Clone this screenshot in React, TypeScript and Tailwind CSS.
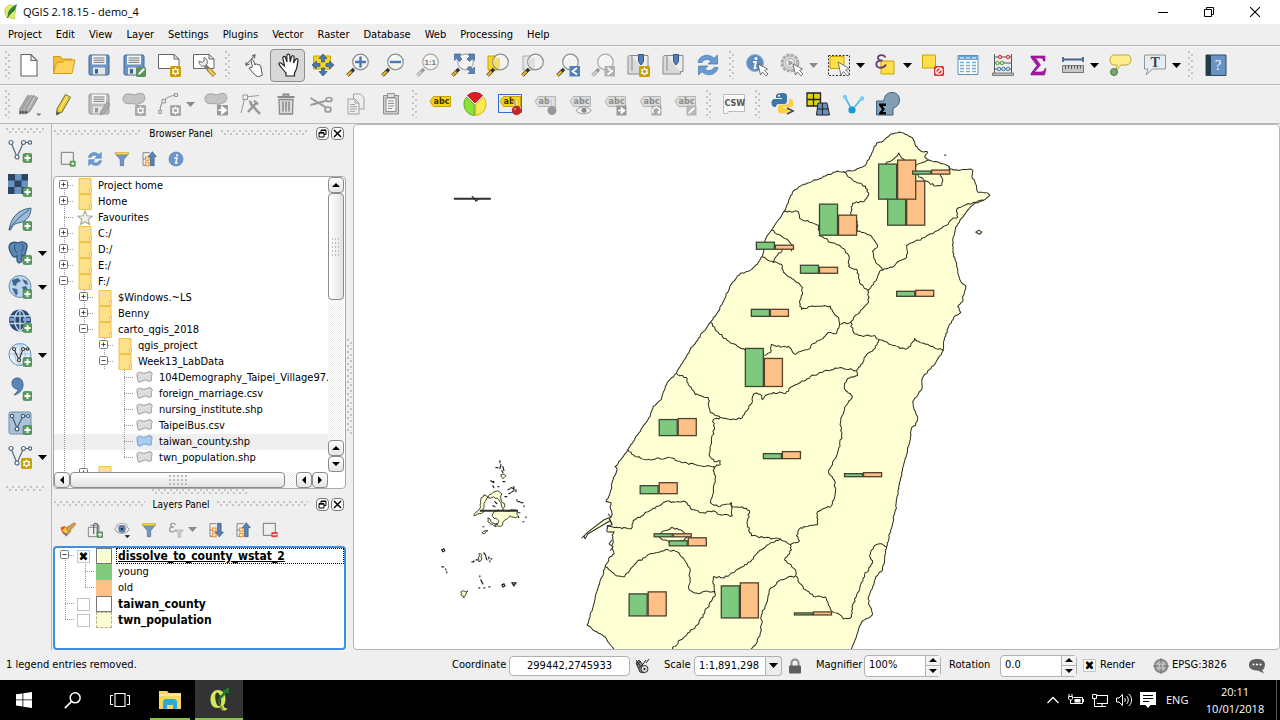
import React, { useState } from "react";
import type { ReactNode } from "react";

const UI = "font-['DejaVu_Sans_Condensed','Noto_Sans',sans-serif]";
const SEGOE = "font-['Open_Sans','Noto_Sans',sans-serif]";

/* ---------- shared icon parts ---------- */

const GreenPlus = () => (
  <g>
    <rect x="15" y="14.5" width="9" height="9" rx="1.5" fill="#5a9a5c" stroke="#3f7d44" strokeWidth=".6" />
    <path d="M19.5 16v6M16.5 19h6" stroke="#fff" strokeWidth="1.8" />
  </g>
);

const StarBadge = ({ c = "#c8a000" }: { c?: string }) => (
  <g>
    <rect x="13" y="13" width="11" height="11" rx="1.500" fill={c} />
    <path d="M18.500 14.500v8M15 16.500l7 4M22 16.500l-7 4" stroke="#fff" strokeWidth="1.100" />
    <circle cx="18.500" cy="18.500" r="2.400" fill={c} stroke="#fff" strokeWidth="1.200" />
  </g>
);

const Lens = ({ handle = "#f5b921", rim = "#8b8f8c", children }: { handle?: string; rim?: string; children?: ReactNode }) => (
  <g>
    <path d="M1.500 22.500l6.500-6.500" stroke={handle === "#f5b921" ? "#333" : "#999"} strokeWidth="3.400" />
    <path d="M1.500 22.500l4-4" stroke={handle} strokeWidth="2.200" />
    <circle cx="14.500" cy="9" r="7.800" fill="#f4f6f3" fillOpacity=".75" stroke={rim} strokeWidth="1.200" />
    <path d="M9 7a6 6 0 0 1 5-4" stroke="#fff" strokeWidth="1.500" fill="none" />
    {children}
  </g>
);

const Tag = ({ on = false, text = "abc" }: { on?: boolean; text?: string }) => (
  <g>
    <path d="M5.500 4.500H22.500v10H5.500L2 9.500z" fill={on ? "#f7d417" : "#dcdcdc"} stroke={on ? "#c8a200" : "#b5b5b5"} />
    <text x="5.500" y="12.300" fontSize="8" fontWeight="700" fontFamily="DejaVu Sans, sans-serif" fill={on ? "#3c3200" : "#8b8b8b"}>{text}</text>
  </g>
);

const Nodes = () => (
  <g fill="#fff" stroke="#4d6a80" strokeWidth="1.200">
    <path d="M3 3.500L9 18l6.500-14.500H22" fill="none" />
    <circle cx="3" cy="3.500" r="2" />
    <circle cx="9" cy="18" r="2" />
    <circle cx="15.500" cy="3.500" r="2" />
    <circle cx="22" cy="3.500" r="1.700" />
  </g>
);

const Floppy = ({ body = "#6a94c4", edge = "#40658f" }: { body?: string; edge?: string }) => (
  <g>
    <rect x="2" y="2" width="20" height="20" rx="1.500" fill={body} stroke={edge} />
    <rect x="5" y="2.500" width="14" height="9" fill="#f4f4f4" />
    <path d="M6.500 5h11M6.500 7.200h11M6.500 9.400h11" stroke="#666" strokeWidth=".9" />
    <rect x="6" y="14.500" width="12" height="7" fill="#e4e4e4" />
    <rect x="8" y="16" width="3" height="4.500" fill={edge} />
  </g>
);

const Blob = ({ f = "#c4c4c4", s = "#a2a2a2" }: { f?: string; s?: string }) => (
  <path d="M1 6.500C1 2 6 1 10 2.500c4 1.500 6-2 10-1s3.500 8 0 9-4 2.500-7.500 1.500S7 12 4.500 11.500 1 9 1 6.500z" fill={f} stroke={s} />
);

const Sync = () => (
  <g>
    <path d="M2 9.500C3 4 8 1.500 13 2.500c2 .4 3.500 1.300 5 2.700L21.500 2v9H12l3.200-3C11.500 5.500 8 6 6 9.500z" fill="#6a9ad2" stroke="#4879b2" strokeWidth=".7" />
    <path d="M22 14.500c-1 5.500-6 8-11 7-2-.4-3.500-1.300-5-2.700L2.500 22v-9H12l-3.200 3c3.700 2.500 7.200 2 9.200-1.500z" fill="#6a9ad2" stroke="#4879b2" strokeWidth=".7" />
  </g>
);

const Info = () => (
  <g>
    <circle cx="10" cy="10" r="8.500" fill="#5e8cc0" stroke="#94b3d4" />
    <circle cx="11" cy="5.500" r="1.500" fill="#fff" />
    <path d="M8 9h3l-1.500 6h2" stroke="#fff" strokeWidth="1.800" fill="none" />
  </g>
);

const Cursor = () => <path d="M13 11l2.500 11 2-3 3.500 4 2-2-3.500-3.500 3-1.500z" fill="#fff" stroke="#555" strokeWidth=".8" />;

const Funnel = () => (
  <g>
    <path d="M2 4h20l-7.500 9v9h-5v-9z" fill="#7297c2" stroke="#476e9d" />
    <rect x="2" y="2" width="20" height="3.500" fill="#f6d83b" stroke="#b59c21" strokeWidth=".7" />
  </g>
);

const Bars = ({ up = false }: { up?: boolean }) => (
  <g>
    <path d="M3 2.500h10M3 2.500v19h9M3 12h6" stroke="#777" fill="none" strokeWidth="1.300" />
    <path d="M7 9h5v5H7zM7 17h5v5H7z" fill="#fff3dc" stroke="#ef8b20" strokeWidth="1.600" />
    {up ? (
      <path d="M17 1l6 7.500h-3.300V22h-5.400V8.500H11z" fill="#5884b8" stroke="#2e5681" />
    ) : (
      <path d="M17 22.500l6-7.500h-3.300V2h-5.400v13H11z" fill="#5884b8" stroke="#2e5681" />
    )}
  </g>
);

const Pencil = ({ x = 0, f = "#f3cf2b", s = "#6b6540" }: { x?: number; f?: string; s?: string }) => (
  <g transform={`translate(${x} 0)`}>
    <path d="M4 17L12.500 2.500l5 2.800L9 20l-5.500 3z" fill={f} stroke={s} />
    <path d="M14.500 4L6.500 18" stroke="#fff" strokeOpacity=".6" />
    <path d="M3.500 23l.5-4 3 2z" fill="#555" />
  </g>
);

const BookBase = () => (
  <g>
    <path d="M5 2.500h17v16H5z" fill="#ececec" stroke="#8b8b8b" />
    <path d="M5 2.500c-3 0-3 1-3 3V21h17.500v-2.500" fill="#dadada" stroke="#8b8b8b" />
    <path d="M6 3v15" stroke="#8b8b8b" />
    <path d="M12.500 1.500h5v7L15 12l-2.500-3.500z" fill="#517fb5" stroke="#2f5582" />
  </g>
);

const Epsilon = ({ c }: { c: string }) => (
  <path d="M11.500 4.500C10 1 3.500 1.500 4 5c.2 2 2 2.500 4.500 2.500C4.500 7.500 2 8.500 2.300 11.500 2.600 16 10 15.500 12 11.500" fill="none" stroke={c} strokeWidth="1.900" />
);

const icons: Record<string, ReactNode> = {
  new: <path d="M4 1.500h10l6 6V23H4zM14 1.500v6h6" fill="#fff" stroke="#666" strokeWidth="1.100" />,
  open: (
    <g stroke="#d39b1e">
      <path d="M1.500 20V3.500h7l2 2.500H20v4" fill="#f2bd38" />
      <path d="M1.500 20.500L4.500 9.500 11 9l2-2h10l-3 13.500z" fill="#fcd35b" />
    </g>
  ),
  save: <Floppy />,
  saveAs: (
    <g>
      <Floppy />
      <rect x="14" y="14" width="10" height="10" rx="1.500" fill="#58905a" />
      <path d="M16 22l1-2.500 4.500-4.500 1.500 1.500-4.500 4.500z" fill="#fff" />
    </g>
  ),
  composer: (
    <g>
      <path d="M1.500 1.500H17l5 4.500v9.500H1.500zM17 1.500V6h5" fill="#fff" stroke="#666" />
      <StarBadge />
    </g>
  ),
  manager: (
    <g>
      <path d="M1.500 1.500H17l5 4.500v9.500H1.500zM17 1.500V6h5" fill="#fff" stroke="#666" />
      <path d="M7 8c0 4 3 6 6 5l2-2c1-3-.5-6-3-6.500V8L10 9.500z" fill="#eee" stroke="#666" />
      <path d="M13.500 13l3 3" stroke="#777" strokeWidth="3.500" />
      <path d="M16 15.500l6.500 7" stroke="#9c8330" strokeWidth="4.500" />
      <path d="M16.500 16l5.500 6" stroke="#f0d058" strokeWidth="2.500" />
    </g>
  ),
  touch: (
    <g stroke="#555" strokeWidth="1">
      <path d="M8 15l3.500-1L10 7.500c0-1.500 2-1.500 2.500 0l1.500 4.500 1-1.500 1.500 1.500 2-.5 1.500 2.500.5 4 1 4-4.500 2-4-3z" fill="#fff" />
      <path d="M5 12l9-10M11 3l3-1.500-.5 4M5 9v3.500L8.500 11" fill="none" />
    </g>
  ),
  pan: (
    <path d="M5 14c-3-3-2.500-5 0-4l3.500 3L7 5.500C6.500 3 9 2.500 9.700 5L11 9 10.800 3c0-2.500 2.700-2.500 3 0l.4 6 1.200-5c.6-2 3-1.500 2.700.5L17.500 10l2-3.500c1-1.700 3-.7 2.500 1C21 12 21.500 14 20 17l-1.500 3v3H10v-3C8.500 18.500 7 16.500 5 14z" fill="#fff" stroke="#222" strokeWidth="1.200" />
  ),
  panSel: (
    <g>
      <path d="M2.500 3h17v13h-17z" fill="#f6d425" stroke="#c8a500" />
      <path d="M12 1l4 4.500h-2.500v3.500h-3V5.500H8zM12 23l4-4.500h-2.500V15h-3v3.500H8zM1 12l4.500-4v2.500H9v3H5.500V16zM23 12l-4.500-4v2.500H15v3h3.500V16z" fill="#4a78ae" stroke="#2c5582" strokeWidth=".7" />
    </g>
  ),
  zoomIn: <Lens><path d="M14.500 3.500v11M9 9h11" stroke="#4a78ae" strokeWidth="2.400" /></Lens>,
  zoomOut: <Lens><path d="M9 9h11" stroke="#4a78ae" strokeWidth="2.400" /></Lens>,
  zoomNative: (
    <Lens handle="#d0d0d0" rim="#aaa">
      <text x="8.500" y="12" fontSize="8" fontWeight="700" fontFamily="Liberation Sans, sans-serif" fill="#777">1:1</text>
    </Lens>
  ),
  zoomFull: (
    <g>
      <Lens rim="#aaa" />
      <path d="M3.500 1h6.500L8 3l3 3-2.500 2.500-3-3-2 2zM23.500 1v6.500l-2-2-3 3L16 6l3-3-2-2zM23.500 20.500H17l2-2-3-3 2.500-2.500 3 3 2-2z" fill="#5682b5" stroke="#2f5682" strokeWidth=".6" />
    </g>
  ),
  zoomSel: (
    <g>
      <path d="M2 3h11v14H2z" fill="#f6d425" stroke="#c8a500" />
      <Lens><path d="M8 5h6v10h-2a7 7 0 0 1-4-10z" fill="#efdf72" /></Lens>
    </g>
  ),
  zoomLayer: (
    <g>
      <path d="M2 3h11v14H2z" fill="#e4e4e4" stroke="#aaa" />
      <Lens><path d="M8 5h6v10h-2a7 7 0 0 1-4-10z" fill="#dedede" /></Lens>
    </g>
  ),
  zoomLast: (
    <g>
      <Lens />
      <path d="M13.500 13H24v10.500H13.500z" fill="#4f80b7" />
      <path d="M21 15l-4.500 3.200 4.500 3.200" fill="none" stroke="#fff" strokeWidth="1.800" />
    </g>
  ),
  zoomNext: (
    <g>
      <Lens handle="#d0d0d0" rim="#aaa" />
      <path d="M13.500 13H24v10.500H13.500z" fill="#b0b0b0" />
      <path d="M16.500 15l4.500 3.200-4.500 3.200" fill="none" stroke="#fff" strokeWidth="1.800" />
    </g>
  ),
  bookmarkNew: <g><BookBase /><StarBadge /></g>,
  bookmark: <BookBase />,
  refresh: <Sync />,
  identify: <g><Info /><Cursor /></g>,
  action: (
    <g>
      <circle cx="10" cy="10" r="8.300" fill="none" stroke="#a8a8a8" strokeWidth="2.200" strokeDasharray="3.200 1.200" />
      <circle cx="10" cy="10" r="7" fill="#dedede" stroke="#a8a8a8" />
      <circle cx="10" cy="10" r="4.500" fill="#eee" stroke="#aaa" />
      <path d="M8.500 7l5 3-5 3z" fill="#999" />
      <Cursor />
    </g>
  ),
  select: (
    <g>
      <path d="M1.500 2.500h21v20h-21z" fill="none" stroke="#333" strokeDasharray="2 1.500" />
      <path d="M3 3.500h14v12H3z" fill="#fde047" stroke="#c9a500" />
      <path d="M11 9l3 13 2.500-3.500 4 4.500 2-2-4-4 3.500-1.500z" fill="#fff" stroke="#555" strokeWidth=".8" />
    </g>
  ),
  selectExpr: (
    <g>
      <path d="M7 8h13v13H7z" fill="#fde047" stroke="#c9a500" />
      <Epsilon c="#694475" />
    </g>
  ),
  deselect: (
    <g>
      <path d="M1.500 2h13v13h-13z" fill="#fde047" stroke="#c9a500" />
      <rect x="13" y="13" width="10" height="10" rx="1.500" fill="#de3434" />
      <circle cx="18" cy="18" r="3.200" fill="none" stroke="#fff" strokeWidth="1.300" />
      <path d="M16 20l4-4" stroke="#fff" strokeWidth="1.300" />
    </g>
  ),
  table: (
    <g>
      <path d="M2 2.500h20v19H2z" fill="#fff" stroke="#5c8fc0" />
      <path d="M2.500 3h19v4h-19z" fill="#6d9fce" />
      <path d="M4 9.500h4M10 9.500h4M16 9.500h4M4 12.500h4M10 12.500h4M16 12.500h4M4 15.500h4M10 15.500h4M16 15.500h4M4 18.500h4M10 18.500h4M16 18.500h4" stroke="#7fa8d0" strokeWidth="1.300" />
      <path d="M4 5h4M10 5h4M16 5h4" stroke="#fff" />
    </g>
  ),
  abacus: (
    <g>
      <path d="M3.500 1v20M20.500 1v20M3.500 4h17M3.500 10h17M3.500 16h17" stroke="#555" fill="none" />
      <path d="M1.500 20h21v2.500h-21z" fill="#bbb" stroke="#666" strokeWidth=".8" />
      <g fill="#f6b2ac" stroke="#c33b34"><circle cx="9" cy="4" r="1.800" /><circle cx="17" cy="4" r="1.800" /></g>
      <g fill="#c2e5be" stroke="#53a04f"><circle cx="6.500" cy="10" r="1.800" /><circle cx="11" cy="10" r="1.800" /></g>
      <g fill="#c6d9ee" stroke="#4c7bab"><circle cx="8" cy="16" r="1.800" /><circle cx="12.500" cy="16" r="1.800" /><circle cx="17" cy="16" r="1.800" /></g>
    </g>
  ),
  sigma: <path d="M5 3h14v5h-1.500C17 5.500 16 5 13.500 5H9.500l5 7L8.500 19H14c3 0 4-.8 5-3.500h1L18.500 22H5v-1.500l6-8L5 4.500z" fill="#aa17a5" stroke="#7d0d7a" strokeWidth=".6" />,
  measure: (
    <g>
      <path d="M2 6.500h20M2 4v5M22 4v5" stroke="#43658c" strokeWidth="1.800" />
      <path d="M1.500 12.500h21v7h-21z" fill="#c8c8c8" stroke="#777" />
      <path d="M4.500 13v3M7.500 13v2.500M10.500 13v3M13.500 13v2.500M16.500 13v3M19.500 13v2.500" stroke="#555" />
    </g>
  ),
  tips: (
    <g>
      <path d="M6 2h13c3 0 4 2 4 4.500S21.500 12 18 12h-5l-5 6 1-6H6c-3 0-4-2.500-4-5s1.500-5 4-5z" fill="#fcee8b" stroke="#bfa33c" />
      <circle cx="6" cy="19" r="3.500" fill="#72a971" stroke="#4b7a4c" />
    </g>
  ),
  textNote: (
    <g>
      <path d="M1.500 2h21v14H9.500L3 22l2-6H1.500z" fill="#e6eef3" stroke="#8d979d" />
      <text x="7.500" y="13.500" fontSize="14" fontWeight="700" fontFamily="Liberation Serif, serif" fill="#444">T</text>
    </g>
  ),
  help: (
    <g>
      <path d="M2 2h20v20.500H2z" fill="#6794c4" stroke="#34485d" />
      <path d="M2 2h5v20.500H2z" fill="#25394d" />
      <text x="11" y="16.500" fontSize="14" fontFamily="Liberation Serif, serif" fill="#fff">?</text>
    </g>
  ),
  edits: (
    <g>
      <g transform="translate(2 1) scale(.92)">
        <Pencil x={-3} f="#a8a8a8" s="#8f8f8f" />
        <Pencil x={0} f="#b8b8b8" s="#8f8f8f" />
        <Pencil x={3} f="#a8a8a8" s="#8f8f8f" />
      </g>
      <path d="M19 21.500h5.500l-2.700 2.500z" fill="#777" />
    </g>
  ),
  edit: <Pencil x={1} />,
  saveEdits: (
    <g>
      <Floppy body="#bcbcbc" edge="#979797" />
      <path d="M14 19l6-9 3 2-5.500 9-4.500 2z" fill="#aaa" stroke="#888" strokeWidth=".7" />
    </g>
  ),
  addFeature: <g><Blob /><StarBadge c="#a8a8a8" /></g>,
  addCurve: (
    <g>
      <path d="M3 20C3 10 9 4 20 3" fill="none" stroke="#999" strokeWidth="1.200" />
      <g fill="#e8e8e8" stroke="#999"><path d="M1.500 18.500h3v3h-3zM5 7.500h3.500v3.500H5zM17.500 1.500h3v3h-3z" /></g>
      <StarBadge c="#a8a8a8" />
    </g>
  ),
  moveFeature: (
    <g>
      <Blob />
      <rect x="13" y="13" width="11" height="10.500" rx="1" fill="#999" />
      <path d="M14.500 18.200h4M18 15l4 3.200-4 3.200z" stroke="#fff" strokeWidth="1.800" fill="#fff" />
    </g>
  ),
  nodeTool: (
    <g stroke="#999" fill="none">
      <path d="M2 21L6 5l14-1.500" />
      <rect x="4" y="3" width="4.500" height="4.500" fill="#eee" />
      <path d="M11 11l10 11M18 10L9 20" strokeWidth="2.600" />
      <path d="M15 8.500l4 4M10 9l3 2" strokeWidth="2" />
    </g>
  ),
  trash: (
    <g stroke="#8a8a8a" fill="#d9d9d9" strokeWidth="1.300">
      <path d="M5 7.500h14l-.5 14.500h-13z" />
      <path d="M3.500 5h17M9.500 4.500V2.500h5v2" fill="none" strokeWidth="1.800" />
      <path d="M9 9.500v10M12 9.500v10M15 9.500v10" strokeWidth="1.500" />
    </g>
  ),
  cut: (
    <g stroke="#999" fill="none">
      <path d="M1.500 6L17 15.500M1.500 13l15-4" strokeWidth="2" />
      <ellipse cx="19" cy="17.500" rx="3" ry="2.500" strokeWidth="1.700" />
      <ellipse cx="20" cy="7.500" rx="3" ry="2" strokeWidth="1.700" />
    </g>
  ),
  copy: (
    <g stroke="#a0a0a0" fill="#eee">
      <path d="M9.500 2h7l3.500 3.500V17H9.500z" />
      <path d="M4 7h7l4 4v11H4zM11 7v4h4" />
      <path d="M6 12.500h5M6 14.700h7M6 17h7M6 19.300h5" />
    </g>
  ),
  paste: (
    <g stroke="#8f8f8f">
      <path d="M4.500 3.500h15V22h-15z" fill="#ccc" />
      <path d="M7 6h10v13.500H7z" fill="#f3f3f3" />
      <path d="M8.500 1.500h7v4h-7z" fill="#ddd" />
      <path d="M9 9h6M9 11.500h6M9 14h6M9 16.500h4" />
    </g>
  ),
  label: <Tag on />,
  pie: (
    <g strokeWidth=".8">
      <path d="M12 11L4.500 3.500C8.500-.5 15.500-.5 19.500 3.500z" fill="#e01b24" stroke="#9d1118" />
      <path d="M11.300 12.500v11C2 22.500-2 12 3.500 5z" fill="#8ae234" stroke="#4e9a06" />
      <path d="M12.700 12.500v11C22 22.500 26 12 20.500 5z" fill="#fce94f" stroke="#c4a000" />
    </g>
  ),
  pinOn: (
    <g>
      <path d="M.500 2.500h23v18H.500z" fill="none" stroke="#2c6fd1" />
      <Tag on text="ab" />
      <path d="M17 8v8" stroke="#eee" strokeWidth="3" /><path d="M17 8v8" stroke="#777" />
      <circle cx="18.500" cy="18.500" r="4.700" fill="#bf2626" /><circle cx="17" cy="17" r="1.200" fill="#e77" />
    </g>
  ),
  pin: (
    <g>
      <Tag text="ab" />
      <path d="M18 8v8" stroke="#f2f2f2" strokeWidth="3" /><path d="M18 8v8" stroke="#aaa" />
      <circle cx="19" cy="18.500" r="4.500" fill="#999" />
    </g>
  ),
  showLabel: (
    <g>
      <Tag />
      <path d="M8 18.500c4-5 11-5 15.500 0-4.500 4.500-11.500 4.500-15.500 0z" fill="#eee" stroke="#999" />
      <circle cx="16" cy="18.300" r="2.500" fill="#888" />
    </g>
  ),
  moveLabel: (
    <g>
      <Tag />
      <path d="M13.500 13.500h10v10h-10z" fill="#999" />
      <path d="M15 18.500h4M18.500 16l3 2.500-3 2.500z" stroke="#fff" strokeWidth="1.600" fill="#fff" />
    </g>
  ),
  rotateLabel: (
    <g>
      <Tag />
      <path d="M13.500 13.500h10v10h-10z" fill="#aaa" />
      <path d="M15.500 21a3.500 3.500 0 1 1 5 .5M20.500 22v-3" stroke="#fff" strokeWidth="1.600" fill="none" />
    </g>
  ),
  changeLabel: (
    <g>
      <Tag />
      <path d="M13.500 13.500h10v10h-10z" fill="#b5b5b5" />
      <path d="M15 22l1-2.500 4.500-4.500 1.500 1.500-4.500 4.500z" fill="#fff" />
    </g>
  ),
  csw: (
    <g>
      <path d="M1.500 2.500h21v17h-16l-1 2h-4z" fill="#fafafa" stroke="#bbb" />
      <text x="2.500" y="14" fontSize="8" fontWeight="700" fontFamily="DejaVu Sans, sans-serif" fill="#555">CSW</text>
    </g>
  ),
  python: (
    <g>
      <path d="M11 1c4 0 5 1 5 3.500V9c0 2-1 3-3 3H8c-2 0-3 1-3 3H3.500C1 15 .5 12 .5 10.500S1.500 7 3.500 7H11V6H5V4c0-2 2-3 6-3z" fill="#3d76a8" />
      <path d="M12 21.500c-4 0-5-1-5-3.500v-3c0-2 1-2.500 3-2.500h5c2 0 3-1 3-3V7h1.500C22 7 22.500 10 22.500 12s-1 3-3 3H12v1h6v2.500c0 2-2 3-6 3z" fill="#fbd043" />
      <circle cx="8" cy="3.700" r="1" fill="#fff" />
      <path d="M16 16l6 3-6 3" fill="none" stroke="#444" strokeWidth="1.600" />
    </g>
  ),
  gridTool: (
    <g stroke="#222">
      <path d="M1 1h6.500v6.500H1zM7.500 1h7v6.500h-7zM1 7.500h6.500V14H1zM7.500 7.500h7V14h-7z" fill="#ded412" strokeWidth="1.300" />
      <path d="M12 11h9l2.500 12H10.500zM16.500 11v12M11 17h11.500" fill="#6a8fc2" />
    </g>
  ),
  geom: (
    <g>
      <path d="M4 5l7 13L21 6" stroke="#53bbe9" strokeWidth="1.800" fill="none" />
      <circle cx="4" cy="5" r="2.200" fill="#7dcdf2" /><circle cx="11" cy="18" r="3.600" fill="#149ad8" /><circle cx="21" cy="6.500" r="2.300" fill="#7dcdf2" />
    </g>
  ),
  groupStats: (
    <g>
      <path d="M.500 9H8C8 4 11 .500 16 .500s7.500 3.500 7.500 7.500-3 7.500-6.500 8v7H.500z" fill="#829fb5" stroke="#3f617c" />
      <path d="M3 11.500h7V14H6.500l2.500 3.200L6.500 20H10v2.500H3v-1.500l3-3.700-3-4z" fill="#000" />
    </g>
  ),
  vector: <g><Nodes /><GreenPlus /></g>,
  raster: (
    <g>
      <path d="M0 1h20v20H0z" fill="#6b93c0" />
      <path d="M0 1h7v6.500H0zM13.500 1H20v6.500h-6.500zM6.500 7.500h7V14h-7zM0 14h6.500v7H0zM13.500 14H20v7h-6.500z" fill="#2a4464" />
      <GreenPlus />
    </g>
  ),
  feather: (
    <g>
      <path d="M1 23C3 12 8 3 23 1c0 7-4 14-13 15-3 .5-5 2-7.500 7z" fill="#9cbbd8" stroke="#3f6284" />
      <path d="M1 23C6 15 12 9 21 3" fill="none" stroke="#3f6284" />
      <GreenPlus />
    </g>
  ),
  elephant: (
    <g>
      <path d="M2 3c3-3 6-2 8-1 4-2 9-1 9 3 0 4-2 6-2 9 0 1-2 1-3 0v6c-2 3-5 2-5-1v-4c-2 2-4 1-5-1C2 11 0 6 2 3z" fill="#5b87b5" stroke="#2f5277" strokeWidth="1.300" />
      <path d="M7 3c-1 4 0 7 2 9M14 3c2 3 1 6-1 8" fill="none" stroke="#2f5277" />
      <GreenPlus />
    </g>
  ),
  wms: (
    <g>
      <circle cx="12" cy="11.500" r="11" fill="#bcd4ea" stroke="#638dbb" />
      <path d="M4 5l6-2 3 3-4 2-1 3-3-1zM14 4l5 2 1 4-3-1zM4 13l5 1 1 4-2 3zM14 12l4-1 2 4-3 4z" fill="#3f678f" />
      <GreenPlus />
    </g>
  ),
  wcs: (
    <g>
      <circle cx="12" cy="11.500" r="11" fill="#2b4a70" />
      <path d="M2 7h20M1 14.500h22M12 0.500v22M12 .5C5 5 5 17 12 22.500M12 .5c7 5 7 17 0 22" fill="none" stroke="#c2d8ef" strokeWidth="1.300" />
      <path d="M2 9h5v3H1.500zM15 9h7v3h-7z" fill="#7ba4d2" />
      <GreenPlus />
    </g>
  ),
  wfs: (
    <g>
      <circle cx="12" cy="11.500" r="11" fill="#e8f0f8" stroke="#5e8cbe" />
      <path d="M1 11h22M12 .5v22M12 .5C5 5 5 17 12 22M12 .5c7 5 7 17 0 22" fill="none" stroke="#9dbfe0" />
      <g fill="#fff" stroke="#333" strokeWidth="1.100"><path d="M6 6l5 11 4-11h4" fill="none" /><circle cx="6" cy="6" r="1.500" /><circle cx="11" cy="17" r="1.500" /><circle cx="15" cy="6" r="1.500" /><circle cx="19.500" cy="6" r="1.300" /></g>
      <GreenPlus />
    </g>
  ),
  comma: (
    <g>
      <path d="M4 6c0-3 2-5 5.500-5S15 4 15 8c0 5-4 9-9 10 3-3 4-4 4-6-4 0-6-2.500-6-6z" fill="#5b87b5" stroke="#3b6190" />
      <GreenPlus />
    </g>
  ),
  virtual: (
    <g>
      <rect x="1" y="1" width="22" height="22" rx="2" fill="#a9c3da" stroke="#6f8ea9" />
      <g fill="#fff" stroke="#45617a" strokeWidth="1.200"><path d="M4 5l5 12 6-12h5" fill="none" /><circle cx="4" cy="5" r="1.700" /><circle cx="9" cy="18" r="1.900" /><circle cx="15" cy="5" r="1.700" /><circle cx="20" cy="5" r="1.500" /></g>
      <GreenPlus />
    </g>
  ),
  newVector: <g><Nodes /><StarBadge /></g>,
  addSel: (
    <g>
      <path d="M2 2h18v18H2z" fill="none" stroke="#777" strokeWidth="1.500" />
      <rect x="14.500" y="14.500" width="9" height="9" rx="1.500" fill="#5a9a5c" /><circle cx="19" cy="19" r="2" fill="#dff0df" />
    </g>
  ),
  filter: <Funnel />,
  collapse: <Bars up />,
  expand: <Bars />,
  info: (
    <g>
      <circle cx="12" cy="12" r="10.500" fill="#6a96cb" stroke="#4a76a9" />
      <circle cx="13.500" cy="6.500" r="1.700" fill="#fff" />
      <path d="M9.500 10.500h4L11.500 18h3" stroke="#fff" strokeWidth="2" fill="none" />
    </g>
  ),
  brush: (
    <g>
      <path d="M1 8l6-2 8 9-6 6C5 19 1 14 1 8z" fill="#e4572f" />
      <path d="M3 13l6-6 6 8-4 3z" fill="#f7cf38" /><path d="M6 17l5 0 2 1-4 4z" fill="#5b88c4" />
      <path d="M9 8l3-1 9-6 3 2-8 9 0 3-3 2z" fill="#d79b50" stroke="#936526" strokeWidth=".8" />
    </g>
  ),
  clip: (
    <g>
      <path d="M2 8h13v14H2zM5 5h13v14" fill="none" stroke="#777" strokeWidth="1.300" />
      <path d="M10 18V5c0-4 6-4 6 0v12" fill="none" stroke="#4e6d8e" strokeWidth="1.800" />
      <GreenPlus />
    </g>
  ),
  eye: (
    <g>
      <path d="M1 11C6 3 18 3 23 11c-5 8-17 8-22 0z" fill="#eee" stroke="#888" strokeWidth="1.300" />
      <circle cx="12" cy="10.500" r="5" fill="#5e88b6" stroke="#38618e" /><circle cx="12" cy="10.500" r="2" fill="#16293f" />
      <path d="M2 6c5-5 14-5 19-1" fill="none" stroke="#999" strokeWidth="1.200" />
      <path d="M16 20h8l-4 4z" fill="#000" />
    </g>
  ),
  exprFilter: (
    <g>
      <g opacity=".55"><Epsilon c="#555" /></g>
      <path d="M11 12h12l-4 5v6h-4v-6z" fill="#ccc" stroke="#aaa" />
    </g>
  ),
  remove: (
    <g>
      <path d="M2 2h18v18H2z" fill="none" stroke="#777" strokeWidth="1.500" />
      <rect x="14" y="15" width="9.500" height="8" rx="1.500" fill="#e0474c" /><path d="M16 19h6" stroke="#fff" strokeWidth="1.800" />
    </g>
  ),
};

const Icon = ({ name, size = 24 }: { name: string; size?: number }) => (
  <svg viewBox="0 0 24 24" width={size} height={size} className="shrink-0" aria-hidden="true">{icons[name]}</svg>
);

const Caret = ({ muted = false }: { muted?: boolean }) => (
  <svg viewBox="0 0 9 5" width="9" height="5" className="shrink-0" aria-hidden="true"><path d="M0 0h9L4.500 5z" fill={muted ? "#8b8b8b" : "#000"} /></svg>
);

/* ---------- toolbars ---------- */

const Grip = ({ vertical = false, className = "" }: { vertical?: boolean; className?: string }) => (
  <div
    aria-hidden="true"
    className={`${vertical ? "w-1.5" : "h-1.5"} bg-[radial-gradient(circle_at_1px_1px,#c4c4c4_1px,transparent_1.5px),radial-gradient(circle_at_4px_4px,#c4c4c4_1px,transparent_1.5px)] bg-[length:6px_6px] ${className}`}
  />
);

type Tool = string;

/* "|" starts a new group; a trailing "v" marks a drop-down, "~" a disabled one. */
const toolbarOne: Tool[] = ["new", "open", "save", "saveAs", "composer", "manager", "|", "touch", "pan", "panSel", "zoomIn", "zoomOut", "zoomNative", "zoomFull", "zoomSel", "zoomLayer", "zoomLast", "zoomNext", "bookmarkNew", "bookmark", "refresh", "|", "identify", "action ~", "select v", "selectExpr v", "deselect", "table", "abacus", "sigma", "measure v", "tips", "textNote v", "|", "help"];
const toolbarTwo: Tool[] = ["edits", "edit", "saveEdits", "addFeature", "addCurve ~", "moveFeature", "nodeTool", "trash", "cut", "copy", "paste", "|", "label", "pie", "pinOn", "pin", "showLabel", "moveLabel", "rotateLabel", "changeLabel", "|", "csw", "|", "python", "gridTool", "geom", "groupStats"];

function Toolbar({ tools, label }: { tools: Tool[]; label: string }) {
  return (
    <div role="toolbar" aria-label={label} className="flex h-[39px] shrink-0 items-center border-b border-[#b8b8b8] pl-[5px] shadow-[inset_0_1px_0_#fafafa]">
      <Grip vertical className="h-7 shrink-0" />
      {tools.map((t, i) => {
        if (t === "|") return <div key={i} className="flex w-3.5 shrink-0 justify-center"><Grip vertical className="h-7" /></div>;
        const [name, drop] = t.split(" ");
        return (
          <div key={i} className="flex shrink-0 items-center">
            <button
              aria-label={name}
              aria-pressed={name === "pan"}
              className={`flex h-[33px] w-[35px] items-center justify-center rounded-sm border ${name === "pan" ? "border-[#8e8e8e] bg-[#d8d8d8]" : "border-transparent"}`}
            >
              <Icon name={name} />
            </button>
            {drop && <button aria-label={`${name} options`} className="flex h-8 w-3 items-center"><Caret muted={drop === "~"} /></button>}
          </div>
        );
      })}
    </div>
  );
}

const sideTools = ["vector", "raster", "feather", "elephant v", "wms v", "wcs", "wfs v", "comma", "virtual", "newVector v"];

function SideBar() {
  return (
    <div role="toolbar" aria-label="Manage layers" className="w-[52px] shrink-0 border-r border-[#b8b8b8] pt-1">
      <Grip className="mx-1.5" />
      {sideTools.map((t) => {
        const [name, drop] = t.split(" ");
        return (
          <div key={name} className="flex h-[34px] items-center pl-1">
            <button aria-label={name} className="flex w-8 justify-center"><Icon name={name} /></button>
            {drop && <button aria-label={`${name} options`} className="pl-0.5"><Caret /></button>}
          </div>
        );
      })}
      <Grip className="mx-1.5 mt-3" />
    </div>
  );
}

/* ---------- docked panels ---------- */

function PanelTitle({ children }: { children: ReactNode }) {
  return (
    <div className="flex h-[18px] shrink-0 items-center gap-2 pr-[3px] pl-0.5">
      <Grip className="flex-1" />
      <h2 className="text-[10px]">{children}</h2>
      <Grip className="flex-1" />
      <div className="flex gap-0.5">
        <button aria-label="Float panel" className="flex size-[13px] items-center justify-center rounded-sm border border-[#777] bg-white">
          <svg viewBox="0 0 9 9" width="9" height="9"><path d="M3 3V1h5v4.500H6M1 3.500h5V8H1zM1 4.200h5M3 1.500h5" fill="none" stroke="#000" /></svg>
        </button>
        <button aria-label="Close panel" className="flex size-[13px] items-center justify-center rounded-sm border border-[#777] bg-white">
          <svg viewBox="0 0 9 9" width="9" height="9"><path d="M1 1l7 7M8 1L1 8" stroke="#000" strokeWidth="1.500" /></svg>
        </button>
      </div>
    </div>
  );
}

/* Guide codes: " " empty, "I" through line, "T" tee, "L" last, "+" closed branch, "-" open branch. */
function Guide({ code, first = false }: { code: string; first?: boolean }) {
  const branch = code === "+" || code === "-";
  return (
    <svg viewBox="0 0 20 16" width="20" height="16" className="shrink-0" aria-hidden="true">
      <g stroke="#999" strokeDasharray="1 1" fill="none">
        {code !== " " && <path d={code === "L" ? "M10.500 0v8" : first ? "M10.500 8v8" : "M10.500 0v16"} />}
        {code !== " " && code !== "I" && <path d="M10 7.500h10" />}
      </g>
      {branch && (
        <g stroke="#777" fill="#fff">
          <rect x="5.500" y="2.500" width="8" height="8" rx="1" />
          <path d={code === "+" ? "M7.500 6.500h4M9.500 4.500v4" : "M7.500 6.500h4"} stroke="#444" />
        </g>
      )}
    </svg>
  );
}

const Folder = () => (
  <svg viewBox="0 0 14 16" width="14" height="16" aria-hidden="true">
    <path d="M1 .500h12v10l-1 5H1z" fill="#fde08a" stroke="#ecc446" />
    <path d="M11.500 10.500h2v5h-2z" fill="#fde9ab" stroke="#e5b93c" strokeWidth=".7" />
  </svg>
);
const Star = () => (
  <svg viewBox="0 0 16 16" width="16" height="16" aria-hidden="true">
    <path d="M8 1l2 4.800 5 .4-3.800 3.300 1.300 5L8 11.800l-4.500 2.700 1.300-5L1 6.200l5-.4z" fill="#f1f1ea" stroke="#adad9c" strokeWidth="1.200" />
  </svg>
);
const Shape = ({ blue }: { blue?: boolean }) => (
  <svg viewBox="0 0 17 16" width="17" height="16" aria-hidden="true">
    <path d="M1 5.500c-.5-3.500 2.500-4 5-2.500 2 1 4-.5 6-1 3-.8 4.500.5 4 2.500-.4 1.500-1.300 2-.5 4 .8 2.500-1.500 3.500-3.500 2.300-2.500-1.300-4.500-.8-6 .4-2.200 1.500-4.500 1-4.300-.9.100-1.600-.500-2.500-.700-4.800z" fill={blue ? "#a9cdee" : "#dcdcdc"} stroke={blue ? "#6d9dcc" : "#999"} />
  </svg>
);

type Row = { g: string; kind: "folder" | "star" | "file"; name: string; on?: boolean };
const browserRows: Row[] = [
  { g: "+", kind: "folder", name: "Project home" },
  { g: "+", kind: "folder", name: "Home" },
  { g: "T", kind: "star", name: "Favourites" },
  { g: "+", kind: "folder", name: "C:/" },
  { g: "+", kind: "folder", name: "D:/" },
  { g: "+", kind: "folder", name: "E:/" },
  { g: "-", kind: "folder", name: "F:/" },
  { g: "I+", kind: "folder", name: "$Windows.~LS" },
  { g: "I+", kind: "folder", name: "Benny" },
  { g: "I-", kind: "folder", name: "carto_qgis_2018" },
  { g: "II+", kind: "folder", name: "qgis_project" },
  { g: "II-", kind: "folder", name: "Week13_LabData" },
  { g: "II T", kind: "file", name: "104Demography_Taipei_Village97.shp" },
  { g: "II T", kind: "file", name: "foreign_marriage.csv" },
  { g: "II T", kind: "file", name: "nursing_institute.shp" },
  { g: "II T", kind: "file", name: "TaipeiBus.csv" },
  { g: "II T", kind: "file", name: "taiwan_county.shp", on: true },
  { g: "II L", kind: "file", name: "twn_population.shp" },
  { g: "I+", kind: "folder", name: "" },
];

const btn = "flex shrink-0 items-center justify-center rounded-sm border border-[#8a8a8a] bg-linear-to-b from-white to-[#e6e6e6]";
const Tri = ({ dir }: { dir: "up" | "down" | "left" | "right" }) => (
  <svg viewBox="0 0 8 8" width="8" height="8" aria-hidden="true">
    <path d={{ up: "M0 6h8L4 2z", down: "M0 2h8L4 6z", left: "M6 0v8L2 4z", right: "M2 0v8l4-4z" }[dir]} />
  </svg>
);
const track = "bg-[repeating-conic-gradient(#ececec_0_25%,#fff_0_50%)] bg-[length:2px_2px]";

function BrowserPanel() {
  return (
    <section className="flex min-h-0 flex-1 flex-col">
      <PanelTitle>Browser Panel</PanelTitle>
      <div className="flex h-[34px] shrink-0 items-center gap-[11px] pl-2">
        {["addSel", "refresh", "filter", "collapse", "info"].map((n) => <button key={n} aria-label={n}><Icon name={n} size={16} /></button>)}
      </div>
      <div className="mx-px flex min-h-0 flex-1 flex-col overflow-hidden rounded-sm border border-[#a9a9a9] bg-white pr-px">
        <div className="flex min-h-0 flex-1">
          <ul className="h-0 min-h-full min-w-0 flex-1 overflow-hidden pt-px">
            {browserRows.map((r, i) => (
              <li key={i} className={`flex h-4 items-center whitespace-nowrap ${r.on ? "bg-[#efefef]" : ""}`}>
                {[...r.g].map((c, k) => <Guide key={k} code={c} first={i === 0} />)}
                <span className={`flex shrink-0 ${r.kind === "folder" ? "w-6 pl-1" : r.kind === "star" ? "w-6 pl-[3px]" : "w-[25px] pl-0.5"}`}>
                  {r.kind === "folder" ? <Folder /> : r.kind === "star" ? <Star /> : <Shape blue={r.on} />}
                </span>
                <span className="pt-px">{r.name}</span>
              </li>
            ))}
          </ul>
          <div className={`flex w-4 shrink-0 flex-col ${track}`}>
            <button aria-label="Scroll up" className={`${btn} h-4`}><Tri dir="up" /></button>
            <div className="flex h-[107px] shrink-0 items-center justify-center rounded-sm border border-[#8a8a8a] bg-linear-to-r from-white to-[#e2e2e2]">
              <div className="h-5 w-2.5 bg-[radial-gradient(#bbb_1px,transparent_1px)] bg-[length:3px_4px]" />
            </div>
            <div className="flex-1" />
            <button aria-label="Scroll up a line" className={`${btn} h-4`}><Tri dir="up" /></button>
            <button aria-label="Scroll down" className={`${btn} h-4`}><Tri dir="down" /></button>
          </div>
        </div>
        <div className={`mr-4 flex h-4 shrink-0 ${track}`}>
          <button aria-label="Scroll left" className={`${btn} w-4`}><Tri dir="left" /></button>
          <div className="flex w-[215px] items-center justify-center rounded-sm border border-[#8a8a8a] bg-linear-to-b from-white to-[#e2e2e2]">
            <div className="h-3 w-5 bg-[radial-gradient(#bbb_1px,transparent_1px)] bg-[length:4px_4px]" />
          </div>
          <div className="flex-1" />
          <button aria-label="Scroll left a step" className={`${btn} w-4`}><Tri dir="left" /></button>
          <button aria-label="Scroll right" className={`${btn} w-4`}><Tri dir="right" /></button>
        </div>
      </div>
    </section>
  );
}

const Tick = ({ label, checked, onChange }: { label: string; checked: boolean; onChange: () => void }) => (
  <input
    type="checkbox"
    aria-label={label}
    checked={checked}
    onChange={onChange}
    className="flex size-[13px] shrink-0 appearance-none items-center justify-center border border-[#c4c4c4] bg-white text-[13px] leading-[11px] font-bold checked:before:content-['✖']"
  />
);

function LayersPanel() {
  const [on, setOn] = useState([true, false, false]);
  const flip = (n: number) => () => setOn(on.map((v, i) => (i === n ? !v : v)));
  const row = "flex h-4 items-center";
  const name = "text-[12px] leading-[14px] font-bold";
  return (
    <section className="flex shrink-0 flex-col">
      <PanelTitle>Layers Panel</PanelTitle>
      <div className="flex h-[33px] shrink-0 items-center gap-[11px] pl-2">
        {["brush", "clip", "eye", "filter", "exprFilter ~", "expand", "collapse", "remove"].map((t) => {
          const [n, d] = t.split(" ");
          return <button key={n} aria-label={n} className="flex items-center gap-1"><Icon name={n} size={16} />{d && <Caret muted />}</button>;
        })}
      </div>
      <ul className="mx-px h-[104px] rounded-sm border-2 border-[#3f8fe0] bg-white">
        <li className={row}>
          <Guide code="-" first />
          <span className="flex w-[21px] pl-0.5"><Tick label="dissolve_to_county_wstat_2" checked={on[0]} onChange={flip(0)} /></span>
          <span className="mr-1 size-4 border border-[#777] bg-[#fdfdd3]" />
          <span className={`flex h-4 flex-1 items-center border border-dotted border-black pl-px underline ${name}`}>dissolve_to_county_wstat_2</span>
        </li>
        <li className={row}><Guide code="I" /><Guide code="T" /><span className="mr-1.5 ml-px h-4 w-4 bg-[#80c97f]" />young</li>
        <li className={row}><Guide code="I" /><Guide code="L" /><span className="mr-1.5 ml-px h-4 w-4 bg-[#fdc086]" />old</li>
        <li className={row}>
          <Guide code="T" /><span className="flex w-[21px] pl-0.5"><Tick label="taiwan_county" checked={on[1]} onChange={flip(1)} /></span>
          <span className="mr-1.5 size-4 border border-[#777] bg-white" /><span className={name}>taiwan_county</span>
        </li>
        <li className={row}>
          <Guide code="L" /><span className="flex w-[21px] pl-0.5"><Tick label="twn_population" checked={on[2]} onChange={flip(2)} /></span>
          <span className="mr-1.5 size-4 border border-dashed border-[#b5b59a] bg-[#fdfdd3]" /><span className={name}>twn_population</span>
        </li>
      </ul>
    </section>
  );
}

/* ---------- map ---------- */

/* Splits every segment into short pieces nudged sideways, giving a surveyed-line look. */
function rough(pts: number[], amp: number, seed: number, close = false) {
  let s = seed;
  const rnd = () => ((s = (s * 16807) % 2147483647) / 2147483647) - 0.5;
  const p = close ? [...pts, pts[0], pts[1]] : pts;
  let d = `M${p[0]} ${p[1]}`;
  for (let i = 2; i < p.length; i += 2) {
    const [x0, y0, x1, y1] = [p[i - 2], p[i - 1], p[i], p[i + 1]];
    const len = Math.hypot(x1 - x0, y1 - y0) || 1;
    const n = Math.max(1, Math.round(len / 2));
    for (let k = 1; k < n; k++) {
      const off = rnd() * amp * 2;
      d += `L${(x0 + ((x1 - x0) * k) / n - ((y1 - y0) / len) * off).toFixed(1)} ${(y0 + ((y1 - y0) * k) / n + ((x1 - x0) / len) * off).toFixed(1)}`;
    }
    d += `L${x1} ${y1}`;
  }
  return close ? d + "Z" : d;
}

const coast = [
  873, 150, 876, 144, 881, 143, 887, 138, 890, 135, 895, 134, 899, 133, 903, 134, 908, 137, 912, 139, 914, 143, 915, 147, 920, 152, 927, 153, 924, 158, 928, 161, 937, 163, 948, 167, 949, 170, 960, 171, 970, 170, 972, 171, 971, 177, 975, 185, 977, 193, 987, 194, 989, 196, 983, 201, 973, 205, 967, 211, 962, 218, 955, 228, 952, 242, 952, 253, 955, 262, 957, 272, 960, 282, 965, 287, 962, 297, 962, 302, 957, 307, 960, 313, 953, 318, 948, 327, 943, 342, 942, 352, 935, 363, 922, 378, 921, 390, 912, 402, 913, 408, 917, 418, 915, 426, 911, 428, 909, 443, 903, 465, 898, 487, 895, 510, 890, 530, 886, 547, 882, 570, 875, 577, 872, 587, 868, 597, 868, 604, 872, 614, 868, 618, 861, 622, 857, 633, 850, 652,
  616, 652, 605, 637, 593, 630, 587, 625, 593, 607, 598, 588, 602, 577, 605, 567, 610, 557, 614, 554, 612, 547, 613, 540, 612, 535, 614, 532, 607, 532, 607, 526, 612, 525, 609, 519, 612, 515, 610, 508, 611, 503, 606, 502, 610, 493, 613, 480, 617, 470, 615, 467, 623, 457, 633, 442, 642, 428, 650, 417, 653, 407, 661, 400, 667, 383, 676, 374, 683, 362, 690, 350, 710, 323, 718, 312, 724, 300, 730, 286, 740, 274, 748, 272, 757, 265, 762, 257, 765, 240, 771, 231, 777, 222, 783, 213, 788, 203, 792, 193, 800, 187, 812, 182, 825, 177, 837, 172, 843, 173, 855, 171, 865, 166, 869, 158,
];

const borders: number[][] = [
  [843, 173, 848, 178, 857, 184, 865, 187, 868, 196, 864, 202, 852, 204, 850, 214, 856, 221, 857, 232, 865, 234, 871, 237, 877, 247, 872, 252, 875, 263, 882, 271],
  [882, 271, 892, 268, 898, 262, 906, 258, 906, 246, 918, 241, 935, 232, 946, 226, 952, 219, 957, 218, 956, 210, 962, 207, 973, 203, 983, 201],
  [783, 213, 797, 212, 799, 219, 809, 223, 818, 226, 819, 236, 830, 243, 840, 247, 848, 256, 848, 267, 856, 270, 860, 285, 867, 291, 873, 285, 879, 272, 882, 271],
  [771, 231, 780, 236, 787, 240, 792, 246, 791, 252],
  [782, 250, 776, 257, 773, 263, 762, 258],
  [773, 263, 781, 265, 783, 273, 796, 283, 802, 288, 802, 295, 799, 303, 801, 310, 810, 307, 830, 307, 832, 312, 838, 318, 839, 325],
  [867, 291, 868, 302, 860, 311, 854, 317, 850, 323, 839, 325, 836, 334, 830, 333, 826, 335, 819, 341, 813, 344, 808, 350, 800, 352, 795, 355, 788, 347, 776, 347, 771, 345, 770, 353, 764, 356],
  [710, 323, 718, 333, 727, 341, 737, 347, 745, 351],
  [850, 323, 853, 333, 862, 337, 874, 336, 878, 340, 890, 345, 905, 350, 910, 347, 914, 339, 918, 342, 930, 347, 943, 351],
  [878, 340, 873, 350, 865, 357, 862, 364, 856, 371, 857, 376, 847, 379, 844, 384, 845, 391, 852, 397, 844, 408, 840, 423, 841, 437, 838, 450, 832, 465, 828, 472, 834, 481, 835, 492, 831, 506, 817, 512, 817, 525, 800, 528, 796, 536, 799, 541, 790, 545],
  [856, 371, 840, 368, 827, 371, 810, 377, 800, 383, 792, 387, 785, 394, 773, 393, 765, 396, 762, 400, 760, 395, 754, 394, 750, 405, 742, 418, 735, 420, 720, 418, 710, 413, 708, 398, 695, 395, 688, 385, 686, 378, 676, 374],
  [720, 418, 713, 420, 714, 430, 711, 440, 709, 456, 714, 462, 720, 461, 720, 465, 713, 467, 700, 466, 683, 463, 670, 458, 647, 460, 635, 457, 628, 450],
  [713, 467, 715, 478, 713, 490, 710, 503, 718, 507, 731, 503, 732, 507, 742, 507, 749, 511, 747, 525, 751, 536, 765, 538, 780, 539, 790, 545, 791, 550, 784, 560, 795, 570, 795, 576],
  [607, 527, 618, 528, 631, 529, 633, 521, 648, 512, 665, 502, 685, 502, 692, 510, 703, 513, 713, 511, 720, 515, 732, 516, 731, 503],
  [605, 567, 615, 575, 624, 577, 636, 563, 650, 554, 665, 550, 677, 552, 684, 560, 690, 570, 689, 590, 698, 594, 706, 591, 715, 592],
  [780, 539, 770, 543, 758, 552, 750, 562, 736, 570, 724, 578, 713, 577, 714, 591, 715, 594, 707, 608, 697, 625, 680, 640, 669, 652],
  [795, 576, 780, 580, 769, 590, 766, 603, 761, 615, 761, 630, 755, 645, 749, 652],
  [795, 576, 803, 589, 815, 597, 825, 597, 831, 611, 838, 614, 843, 619, 851, 617, 853, 603, 859, 590, 864, 575, 872, 563, 869, 556, 873, 547, 879, 544, 886, 547],
  [885, 165, 893, 160, 898, 154, 903, 160, 905, 163],
  [915, 172, 915, 166, 928, 161], [915, 175, 925, 182, 935, 187, 941, 186, 942, 182, 939, 175], [948, 167, 947, 174],
  [659, 536, 664, 531, 673, 528, 682, 531, 687, 537, 683, 541, 671, 542, 662, 540, 659, 536],
];

const islets: number[][] = [
  [481, 507, 481, 500, 484, 495, 488, 497, 484, 504, 483, 513, 474, 516, 478, 511],
  [488, 498, 492, 494, 498, 491, 502, 494, 501, 499, 505, 506, 503, 509, 499, 500, 494, 497],
  [493, 514, 498, 510, 507, 511, 516, 510, 519, 518, 510, 516, 504, 521, 502, 526, 495, 527, 499, 521, 493, 517],
  [488, 518, 492, 523, 498, 524, 494, 526, 488, 522],
  [501, 475, 506, 476, 503, 479],
  [479, 554, 482, 555, 481, 561, 479, 562],
  [461, 592, 468, 591, 466, 595, 464, 598, 461, 595],
  [482, 533, 488, 531, 483, 534],
];

/* x, top of the green bar, top of the orange bar, shared base */
const charts = [
  [887, 190, 182, 226], [878, 165, 161, 200], [912, 172, 171, 175], [819, 205, 216, 236], [756, 243, 246, 250], [800, 266, 268, 274], [896, 292, 291, 297], [751, 310, 310, 317], [745, 349, 359, 387], [659, 420, 419, 436], [763, 454, 452, 459], [844, 474, 473, 477], [640, 486, 483, 494], [654, 534, 534, 537], [669, 541, 538, 546], [629, 594, 592, 616], [721, 586, 583, 618], [794, 613, 612, 615],
];

const specks = "M500 461v2M501 465l-1 4M503 467l1 4M502 471l1 2M496 468h2M491 481l3 2M492 482l2 0M503 482h2M493 486l1 2M498 487h1M508 490l2-1M511 488l3 1M512 492l2-1M514 487v3M516 490v2M509 494l2-1M518 502h2M521 503h2M517 500v1M524 506v1M526 517v1M523 522h1M518 513h2M505 497h2M495 502l2 2M493 506l2 1M483 527h1M442 550l2-1 1 2-2 1zM442 567h2M446 569v1M447 572v1M472 562h2M474 561v1M484 553l2 3M486 557l1 3M489 557v2M491 559h1M476 560h2M480 576v1M481 580l2 4M479 588h1M484 588h1M489 587h1M502 585l2-1 1 2-2 1zM512 583h4l-2 3zM944 156h1M490 561v1";

function MapCanvas() {
  return (
    <main className="min-h-0 min-w-0 flex-1 overflow-hidden rounded-sm border border-[#b4b4b4] bg-white">
      <svg viewBox="354 126 924 523" preserveAspectRatio="xMidYMid slice" className="block h-full w-full" role="img" aria-label="Population of Taiwan counties, young and old">
        <g fill="#ffffd4" stroke="#2c2c22" strokeWidth="1" strokeLinejoin="round">
          <path d={rough(coast, 0.6, 7, true)} />
          <path d="M582 538l6-6 16-12 5-2 1 3-22 13-3 5-1-3zM608 514l3 4M609 519l3 5M612 540l-3 4 4 3-3 4" />
          <path d="M975 233l3-2 3 2-2 2z" />
          {islets.map((b, i) => <path key={i} d={rough(b, 0.9, 11 + i * 5, true)} strokeWidth=".9" />)}
          {borders.map((b, i) => <path key={i} d={rough(b, 0.9, 31 + i * 17)} fill="none" />)}
        </g>
        <path d={specks} fill="none" stroke="#222" strokeWidth="1.200" strokeLinecap="round" />
        <path d="M480 511h38M454 199.500h37" stroke="#2d3529" strokeWidth="2" />
        <path d="M472 197l3 3 1 2 3-2" stroke="#222" fill="none" />
        <g stroke="#3a4634" strokeWidth="1.300">
          {charts.map(([x, g, o, base]) => (
            <g key={`${x}-${base}`}>
              <rect x={x} y={g} width="18" height={base - g} fill="#7fc97f" />
              <rect x={x + 19} y={o} width="18" height={base - o} fill="#fdc086" stroke="#57412c" />
            </g>
          ))}
        </g>
      </svg>
    </main>
  );
}

/* ---------- status bar and task bar ---------- */

const field = "h-5 rounded-sm border border-[#b0b0b0] bg-white px-1";

function Spin({ id, value, width }: { id: string; value: string; width: string }) {
  return (
    <div className={`flex h-[22px] ${width} rounded-sm border border-[#b0b0b0] bg-white`}>
      <input id={id} defaultValue={value} className="min-w-0 flex-1 px-1" />
      <div className="flex w-[15px] flex-col border-l border-[#b0b0b0]">
        <button aria-label={`Increase ${id}`} className="flex flex-1 items-center justify-center border-b border-[#b0b0b0] bg-[#f4f4f4]"><Tri dir="up" /></button>
        <button aria-label={`Decrease ${id}`} className="flex flex-1 items-center justify-center bg-[#f4f4f4]"><Tri dir="down" /></button>
      </div>
    </div>
  );
}

function StatusBar() {
  const [render, setRender] = useState(true);
  return (
    <footer className="flex h-[30px] shrink-0 items-center pt-px pr-[15px] pl-1.5 whitespace-nowrap">
      <span className="flex-1">1 legend entries removed.</span>
      <label htmlFor="coordinate" className="w-[57px]">Coordinate</label>
      <input id="coordinate" defaultValue="299442,2745933" className={`${field} w-[121px] text-center`} />
      <svg viewBox="0 0 16 16" width="16" height="16" className="mr-3.5 ml-1" aria-hidden="true">
        <path d="M2 5l3-3 8 10-3 3-4-1z" fill="#888" stroke="#333" />
        <path d="M3 7l4-4M5 10l4-4M2 2l4 6M12 2l-3 4M15 1l-3 4" stroke="#222" fill="none" />
        <circle cx="10.500" cy="11" r="3.500" fill="#ddd" stroke="#333" /><circle cx="10.500" cy="11" r="1" />
      </svg>
      <label htmlFor="scale" className="w-[30px]">Scale</label>
      <div className="flex w-[88px]">
        <input id="scale" defaultValue="1:1,891,298" className={`${field} min-w-0 flex-1 rounded-r-none pr-0`} />
        <button aria-label="Choose scale" className="flex h-5 w-4 items-center justify-center rounded-r-sm border border-l-0 border-[#b0b0b0] bg-[#ededed]"><Caret /></button>
      </div>
      <svg viewBox="0 0 14 16" width="14" height="16" className="mr-3.5 ml-1.5" aria-hidden="true">
        <path d="M3.500 8V5a3.500 3.500 0 0 1 7 0v3" fill="none" stroke="#8a8a8a" strokeWidth="2" /><rect x="1" y="7.500" width="12" height="8" rx="1" fill="#5e5e5e" />
      </svg>
      <label htmlFor="magnifier" className="w-12">Magnifier</label>
      <Spin id="magnifier" value="100%" width="w-[77px]" />
      <label htmlFor="rotation" className="ml-2 w-[51px]">Rotation</label>
      <Spin id="rotation" value="0.0" width="w-[77px]" />
      <label className="ml-1.5 flex w-[70px] items-center gap-1"><Tick label="Render" checked={render} onChange={() => setRender(!render)} />Render</label>
      <button className="flex items-center gap-[3px]">
        <svg viewBox="0 0 16 16" width="16" height="16" aria-hidden="true">
          <circle cx="8" cy="8" r="6" fill="#e4e4e4" stroke="#8c8c8c" strokeWidth="2.500" /><path d="M8 0v16M0 8h16M3.500 8L8 3.500 12.500 8 8 12.500z" fill="none" stroke="#777" />
        </svg>
        <span className="w-[77px] text-left">EPSG:3826</span>
      </button>
      <button aria-label="Messages">
        <svg viewBox="0 0 16 16" width="16" height="16"><path d="M8 1c5 0 8 2 8 5.500S14 12 13 12l2 3.500-6-3C4 12.500 0 11 0 7s3-6 8-6z" fill="#606060" /><g fill="#fff"><circle cx="4.500" cy="6.500" r="1.100" /><circle cx="8" cy="6.500" r="1.100" /><circle cx="11.500" cy="6.500" r="1.100" /></g></svg>
      </button>
    </footer>
  );
}

const TitleLogo = () => (
  <svg viewBox="0 0 14 16" width="14" height="16" aria-hidden="true">
    <path d="M7 1C3 1 0 4 1 9c.5 4 3 5 6 5l4 1-1-3c2-3 2-7 0-10z" fill="#dcea6e" stroke="#b3c93d" strokeWidth=".7" />
    <path d="M4 12c-1-3 1-8 9-12-1 4-1 5-3 7l-4 3z" fill="#2f8a35" /><path d="M3 14l7-9" stroke="#155c1f" />
  </svg>
);

const QLogo = ({ size }: { size: number }) => (
  <svg viewBox="0 0 24 24" width={size} height={size} aria-hidden="true">
    <path fillRule="evenodd" d="M11 3C6 3 3.500 7.500 3.500 12.500S6 21 10.500 21c1 0 2-.2 2.800-.8.7 1.800 1.500 3.300 4.200 3.300 1.500 0 2.500-.8 3-2-2 .3-3.300-.8-4-3C18 16.500 18.500 14 18.500 12 18.500 7 16 3 11 3zM9.800 5.500c-1.800 1-2 4-1.300 7.500.7 4 2 6.500 4 6 1.800-.8 2-4 1.300-7.500-.7-4-2.200-6.500-4-6z" fill="#d5e85c" />
    <path d="M10 16l3-7 4-4-2-.5L22 0l0 7-2-1.500-5 5.500z" fill="#1f7a2c" />
    <path d="M11 13l6 9.500-3-1z" fill="#6f9a26" />
  </svg>
);

function TaskBar() {
  return (
    <nav aria-label="Task bar" className={`flex h-10 shrink-0 items-stretch bg-black text-white ${SEGOE}`}>
      <button aria-label="Start" className="flex w-12 items-center justify-center">
        <svg viewBox="0 0 16 16" width="16" height="16"><path d="M0 2.300L6.500 1.400v6.100H0zM7.300 1.300L16 0v7.500H7.300zM0 8.300h6.500v6.200L0 13.600zM7.300 8.300H16V16l-8.700-1.200z" fill="#fff" /></svg>
      </button>
      <button aria-label="Search" className="flex w-12 items-center justify-center">
        <svg viewBox="0 0 16 16" width="17" height="17"><circle cx="10.500" cy="5.500" r="4.700" fill="none" stroke="#fff" strokeWidth="1.400" /><path d="M7 9L.8 15.200" stroke="#fff" strokeWidth="1.500" /></svg>
      </button>
      <button aria-label="Task view" className="flex w-12 items-center justify-center">
        <svg viewBox="0 0 20 16" width="20" height="16"><path d="M5 1.500h10v13H5zM3 3.500H.5v9H3M17 3.500h2.500v9H17" fill="none" stroke="#fff" strokeWidth="1.100" /></svg>
      </button>
      <button aria-label="File Explorer" className="mx-1.5 flex w-10 items-center justify-center border-b-2 border-[#8ac243]">
        <svg viewBox="0 0 22 19" width="22" height="19"><path d="M0 1h8l2 2h12v16H0z" fill="#f9d467" /><path d="M0 4h22v2H0z" fill="#fbe6a0" /><path d="M4 19v-8l2-2h10l2 2v8h-4v-4H8v4z" fill="#28a8ea" /></svg>
      </button>
      <button aria-label="QGIS" className="ml-[-1px] flex w-12 items-center justify-center border-b-2 border-[#8ac243] bg-[#333]"><QLogo size={24} /></button>
      <div className="flex-1" />
      <div className="flex items-center gap-2">
        <svg viewBox="0 0 14 16" width="14" height="16"><path d="M1.500 11L7 5.500l5.500 5.500" fill="none" stroke="#fff" strokeWidth="1.300" /></svg>
        <svg viewBox="0 0 16 16" width="16" height="16"><path d="M5.500 5.500h9v6h-9" fill="none" stroke="#fff" /><path d="M6.500 7h6v3.500h-6zM14.500 7H16v3h-1.500z" fill="#fff" /><path d="M1 2v2M4 2v2M.500 4.500h4v2c0 2-4 2-4 0zM2.500 8v3.500h3" fill="none" stroke="#fff" /></svg>
        <svg viewBox="0 0 16 16" width="16" height="16"><path d="M4.500 3.500h11v8h-11M10 12v2.500M6 14.500h8" fill="none" stroke="#fff" strokeWidth="1.100" /><path d="M.500 2.500h4v4h-4zM2.500 7v7.500H6" fill="#000" stroke="#fff" /></svg>
        <svg viewBox="0 0 16 16" width="16" height="16"><path d="M.500 6h2.500l3.500-3.500v11L3 10H.5zM8.500 6c1 1 1 3 0 4M10.500 4c2.300 2 2.300 6 0 8M12.800 2c3.600 3 3.600 9 0 12" fill="none" stroke="#fff" /></svg>
        <svg viewBox="0 0 16 16" width="16" height="16"><path d="M0 0h16v13h-5.500L8 16l-2.500-3H0z" fill="#fff" /><path d="M3 3.500h10M3 6.500h10M3 9.500h6" stroke="#000" strokeWidth="1.200" /></svg>
        <span className="w-[34px] pl-0.5 text-[11px]">ENG</span>
      </div>
      <div className="flex w-[74px] flex-col items-center justify-center text-[11px] leading-[17px]"><span>20:11</span><span>10/01/2018</span></div>
      <div className="mr-[3px] ml-1 border-l border-[#555]" />
    </nav>
  );
}

/* ---------- window ---------- */

const menus = ["Project", "Edit", "View", "Layer", "Settings", "Plugins", "Vector", "Raster", "Database", "Web", "Processing", "Help"];

export default function App() {
  return (
    <div className={`flex h-screen min-h-[600px] flex-col overflow-hidden bg-[#efefef] text-[11px] text-black ${UI}`}>
      <header className={`flex h-6 shrink-0 items-center bg-white pr-0.5 pl-1 ${SEGOE}`}>
        <TitleLogo />
        <h1 className="ml-[5px] flex-1 text-[11px]">QGIS 2.18.15 - demo_4</h1>
        <div className="flex h-5">
          <button aria-label="Minimize" className="flex w-[46px] items-center justify-center"><svg viewBox="0 0 10 10" width="10" height="10"><path d="M0 5.500h10" stroke="#000" /></svg></button>
          <button aria-label="Restore" className="flex w-[46px] items-center justify-center"><svg viewBox="0 0 10 10" width="10" height="10"><path d="M.500 2.500h7v7h-7zM2.500 2.500v-2h7v7h-2" fill="none" stroke="#000" /></svg></button>
          <button aria-label="Close" className="flex w-[46px] items-center justify-center"><svg viewBox="0 0 10 10" width="10" height="10"><path d="M0 0l10 10M10 0L0 10" stroke="#000" strokeWidth="1.100" /></svg></button>
        </div>
      </header>
      <nav aria-label="Menu" className="flex h-[22px] shrink-0 items-center gap-3.5 border-b border-[#b8b8b8] pt-0.5 pl-2">
        {menus.map((m) => <button key={m}>{m}</button>)}
      </nav>
      <Toolbar tools={toolbarOne} label="Project and map tools" />
      <Toolbar tools={toolbarTwo} label="Editing and labelling tools" />
      <div className="flex min-h-0 flex-1">
        <SideBar />
        <div className="flex w-[295px] shrink-0 flex-col">
          <BrowserPanel />
          <Grip className="mx-auto w-24 shrink-0" />
          <LayersPanel />
        </div>
        <div className="flex w-1.5 shrink-0 items-center"><Grip vertical className="h-24" /></div>
        <MapCanvas />
      </div>
      <StatusBar />
      <TaskBar />
    </div>
  );
}
